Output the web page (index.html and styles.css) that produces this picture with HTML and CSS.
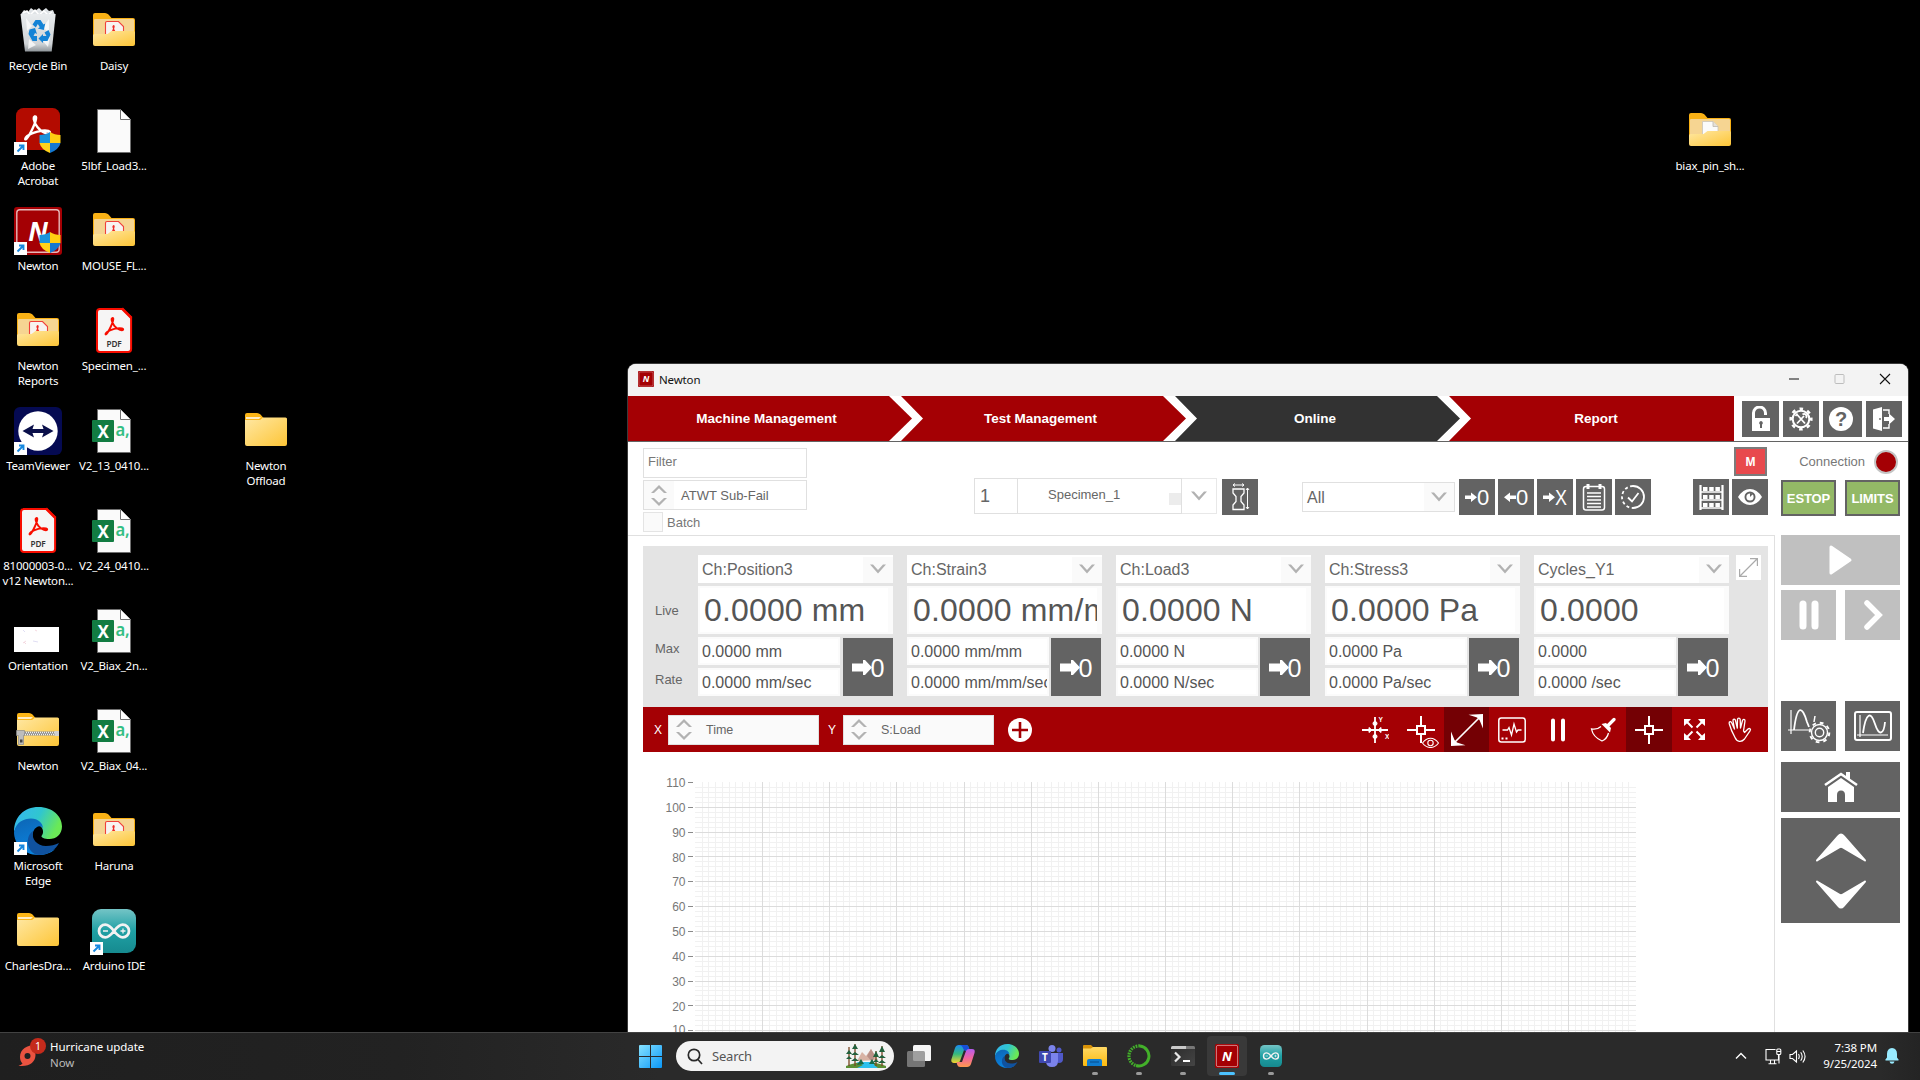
FILE: index.html
```html
<!DOCTYPE html>
<html lang="en">
<head>
<meta charset="utf-8">
<title>Desktop</title>
<link rel="stylesheet" href="styles.css">
</head>
<body>
<svg class="defs" width="0" height="0" aria-hidden="true">
  <defs>
    <linearGradient id="gFolder" x1="0" y1="0" x2="1" y2="1"><stop offset="0" stop-color="#ffe8a4"/><stop offset="1" stop-color="#fdc536"/></linearGradient>
    <linearGradient id="gTeal" x1="0" y1="0" x2="0" y2="1"><stop offset="0" stop-color="#74c4c6"/><stop offset=".5" stop-color="#1fa0a4"/><stop offset="1" stop-color="#168a8f"/></linearGradient>
    <linearGradient id="gBin" x1="0" y1="0" x2="0" y2="1"><stop offset="0" stop-color="#e9ecee"/><stop offset=".8" stop-color="#cfd3d6"/><stop offset="1" stop-color="#8f959a"/></linearGradient>
    <linearGradient id="gEdgeTop" x1="0" y1="0" x2="1" y2=".35"><stop offset="0" stop-color="#35b5f3"/><stop offset=".55" stop-color="#30c6cf"/><stop offset="1" stop-color="#6ae956"/></linearGradient>
    <linearGradient id="gEdgeMid" x1="0" y1="0" x2=".4" y2="1"><stop offset="0" stop-color="#0d65b4"/><stop offset="1" stop-color="#0a84e0"/></linearGradient>
    <linearGradient id="gWin" x1="0" y1="0" x2="1" y2="1"><stop offset="0" stop-color="#86e2ff"/><stop offset="1" stop-color="#0a97f7"/></linearGradient>
    <linearGradient id="gCopA" x1="0" y1="0" x2="0" y2="1"><stop offset="0" stop-color="#1a8cf2"/><stop offset=".5" stop-color="#35b97c"/><stop offset="1" stop-color="#f5d52c"/></linearGradient>
    <linearGradient id="gCopB" x1="0" y1="0" x2="0" y2="1"><stop offset="0" stop-color="#b45cf0"/><stop offset=".5" stop-color="#f2649e"/><stop offset="1" stop-color="#ff9a4c"/></linearGradient>
    <linearGradient id="gExp" x1="0" y1="0" x2="0" y2="1"><stop offset="0" stop-color="#ffd965"/><stop offset="1" stop-color="#fbb90e"/></linearGradient>
    <linearGradient id="gTerm" x1="0" y1="0" x2="1" y2="1"><stop offset="0" stop-color="#2b2b2b"/><stop offset="1" stop-color="#454545"/></linearGradient>

    <path id="acro" d="M1.2 17.2C4 14.500 8.500 4.500 8.300 1.900 8.100.4 6.300.8 6.600 2.900 7.200 6.600 10.500 11.600 15 12.900 18.200 13.800 19.200 12.200 17 11.400 13.500 10.300 5 12.500 1.800 15.200.2 16.600.2 18 1.200 17.200Z"/>

    <symbol id="i-folder" viewBox="0 0 48 48">
      <path d="M3 8q0-2 2-2h10q2 0 3.500 1.500L21.500 11H43q2 0 2 2v8H3z" fill="#fbb517"/>
      <path d="M4 12h13l2-2h-15z" fill="#fff" opacity=".75"/>
      <path d="M3 13h15l3-2.500h22.500q1.500 0 1.500 1.500v25q0 2-2 2H5q-2 0-2-2z" fill="url(#gFolder)"/>
    </symbol>
    <symbol id="i-open" viewBox="0 0 48 48">
      <path d="M3 8q0-2 2-2h10q2 0 3.500 1.500L21.500 11H43q2 0 2 2v24H3z" fill="#f9b115"/>
      <rect x="4" y="12" width="40" height="18" rx="1" fill="#f6d592"/>
    </symbol>
    <symbol id="i-openfront" viewBox="0 0 48 48">
      <path d="M3 28.500q0-1.500 1.500-1.500h13l4-3h22q1.500 0 1.500 1.500v11.500q0 2-2 2H5q-2 0-2-2z" fill="url(#gFolder)"/>
    </symbol>
    <symbol id="i-folderpdf" viewBox="0 0 48 48">
      <use href="#i-open"/>
      <path d="M15.500 31V16q0-1.500 1.500-1.500h11.500l5 5V31z" fill="#f7f3f0" stroke="#f0413a" stroke-width="1.100"/>
      <use href="#acro" transform="translate(18.500 18) scale(.68)" fill="none" stroke="#ee2a24" stroke-width="1.700"/>
      <use href="#i-openfront"/>
    </symbol>
    <symbol id="i-folderdoc" viewBox="0 0 48 48">
      <use href="#i-open"/>
      <path d="M16.500 31V14.500h10.500l5 5V31z" fill="#fbfbfb" stroke="#c9c4ba" stroke-width=".8"/>
      <path d="M27 14.500v5h5" fill="#e4e0d8" stroke="#bdb8ae" stroke-width=".8"/>
      <use href="#i-openfront"/>
    </symbol>
    <symbol id="i-zip" viewBox="0 0 48 48">
      <use href="#i-folder"/>
      <path d="M5 26.500h38" stroke="#8b8b8b" stroke-width="4"/>
      <path d="M6 25.500h37M7 27.500h36" stroke="#efefef" stroke-width="1.300" stroke-dasharray="1 1"/>
      <path d="M2.500 23.500h8v5H9.500v9h-5v-9h-2z" fill="#bdbdbd" stroke="#8a8a8a" stroke-width=".7"/>
      <rect x="6" y="32.500" width="2.500" height="3" fill="#444"/>
      <rect x="40.500" y="24" width="4.500" height="5" fill="#d0d0d0"/>
    </symbol>
    <symbol id="i-file" viewBox="0 0 48 48">
      <path d="M7.500 2.500h23l10 10v33h-33z" fill="#fafafa" stroke="#6f6f6f"/>
      <path d="M30.500 2.500v10h10" fill="#fff" stroke="#6f6f6f"/>
    </symbol>
    <symbol id="i-csv" viewBox="0 0 48 48">
      <use href="#i-file"/>
      <rect x="2" y="13" width="22" height="22" rx="1" fill="#127c42"/>
      <text x="13" y="30.500" text-anchor="middle" font-size="17" font-weight="bold" fill="#fff">X</text>
      <text x="25.500" y="29" font-size="18" font-weight="600" fill="#34bf84" textLength="14" lengthAdjust="spacingAndGlyphs">a,</text>
    </symbol>
    <symbol id="i-pdf" viewBox="0 0 48 48">
      <path d="M9 1.900h23.500l8.600 8.600V42q0 3-3 3H10q-3 0-3-3V5q0-3 3-3z" fill="#f6f5f5" stroke="#f80d00" stroke-width="2"/>
      <path d="M32 1.500l9.500 9.500" stroke="#f80d00" stroke-width="2.500"/>
      <use href="#acro" transform="translate(15 10)" fill="none" stroke="#f80d00" stroke-width="1.900"/>
      <text x="24" y="39.500" text-anchor="middle" font-size="9.500" font-weight="600" fill="#333" textLength="15" lengthAdjust="spacingAndGlyphs">PDF</text>
    </symbol>
    <symbol id="i-cut" viewBox="0 0 48 48">
      <rect x="0" y="35" width="13" height="13" fill="#fff"/>
      <path d="M3.500 44.500L9 39M5 38.500h4.500V43" fill="none" stroke="#1788e0" stroke-width="1.900"/>
    </symbol>
    <symbol id="i-shield" viewBox="0 0 48 48">
      <path d="M36 25v11H25.500V28q6 0 10.500-3z" fill="#1b93dc"/>
      <path d="M36 25v11h10.500V28q-6 0-10.500-3z" fill="#ffce12"/>
      <path d="M36 46V36H25.500q1.500 6.500 10.500 10z" fill="#ffd21a"/>
      <path d="M36 46V36h10.500q-1.500 6.500-10.500 10z" fill="#1478d0"/>
    </symbol>
    <symbol id="i-acrobat" viewBox="0 0 48 48">
      <rect x="2" y="1" width="44" height="42" rx="7.500" fill="#b30b00"/>
      <use href="#acro" transform="translate(10.500 8) scale(1.400)" fill="none" stroke="#fff" stroke-width="1.700"/>
      <use href="#i-shield"/><use href="#i-cut"/>
    </symbol>
    <symbol id="i-n" viewBox="0 0 48 48">
      <rect width="48" height="48" rx="3" fill="#a40004"/>
      <rect x="2.800" y="2.800" width="42.400" height="42.400" rx="3" fill="none" stroke="#e6b9ba" stroke-width="1.400"/>
      <text x="24" y="34" text-anchor="middle" font-size="26" font-weight="bold" font-style="italic" fill="#fff">N</text>
    </symbol>
    <symbol id="i-newton" viewBox="0 0 48 48"><use href="#i-n"/><use href="#i-shield"/><use href="#i-cut"/></symbol>
    <symbol id="i-tv" viewBox="0 0 48 48">
      <rect width="48" height="48" rx="6" fill="#050a52"/>
      <circle cx="24" cy="24" r="19.700" fill="#fff"/>
      <path d="M8.500 24l11.500-6.500-1.500 4.500h11L28 17.500 39.500 24 28 30.500l1.500-4.500h-11l1.500 4.500z" fill="#0a0f4a"/>
      <use href="#i-cut"/>
    </symbol>
    <symbol id="i-thumb" viewBox="0 0 48 48">
      <rect y="20" width="45" height="25" fill="#fff"/>
      <path d="M21 23l2 1M9 36l3-2M10 35l2 2" stroke="#f3d5dc" stroke-width=".9"/>
      <path d="M19 34l5 1M9 23l2 2" stroke="#dcdaf2" stroke-width=".9"/>
    </symbol>
    <symbol id="i-bin" viewBox="0 0 48 48">
      <path d="M7 7l3-4 4 2 3-4 4 3 4-3 3 3 4-3 3 3 4-1 2 5-2 6H9z" fill="#dfe3e6"/>
      <path d="M9 6l4-2 3 4 5-5 4 5 5-4 4 4 4-3" stroke="#fff" stroke-width="1.500" fill="none"/>
      <path d="M6.500 7h35.200l-4 37.500H11z" fill="url(#gBin)"/>
      <path d="M12 11l6 8-5 5zM35 12l-6 8 6 6zM15 32l7 6-8 4zM28 33l8-3-2 10z" fill="#fff" opacity=".75"/>
      <path d="M18.500 17.500l3-4.500h5l3 4.500 1.800-1-1.500 6.500-6-1.500 2-1.300-2-3.200-2 3.500z" fill="#1483d6"/>
      <path d="M15.500 22.500l5.500-1.500 2 6-2-1-1.500 3h3.500v5h-4.500l-4-7z" fill="#1483d6"/>
      <path d="M24.500 31.500l4.500-4.500v2h3.500l-2-3.500 4-2.500 2 4.500-3 6.500H29v2z" fill="#1483d6"/>
    </symbol>
    <symbol id="i-edge" viewBox="0 0 48 48">
      <path d="M0 25C0 10 10 0 24.500 0 39 0 48 9.500 48 19.500 48 27.500 42 32 35.500 32 30 32 27 30.500 27.500 29 30 26 30 21 24 17 16 11 4 15 0 25z" fill="url(#gEdgeTop)"/>
      <path d="M0 25C2 15 10 11.500 17 11.500c7 0 12 4.500 12 10-1-2-4-3-6-1.500-7 4-5 16 2 21 6 4 12 3.500 16 1C37 46 31 48 24 48 10 48 0 37 0 25z" fill="url(#gEdgeMid)"/>
      <path d="M19 24c-2 8 4 15 13 15 5 0 9-1 13-3-3 6-10 12-20 12C13 47 10 30 19 24z" fill="#10529f"/>
    </symbol>
    <symbol id="i-edgecut" viewBox="0 0 48 48"><use href="#i-edge"/><use href="#i-cut"/></symbol>
    <symbol id="i-ard" viewBox="0 0 48 48">
      <rect x="2" y="2" width="44" height="44" rx="9" fill="url(#gTeal)"/>
      <path d="M24 24c-3.500-4.500-5.500-6.300-8.700-6.300a6.300 6.300 0 0 0 0 12.600c3.200 0 5.200-1.800 8.700-6.300 3.500-4.500 5.500-6.300 8.700-6.300a6.300 6.300 0 0 1 0 12.600c-3.200 0-5.200-1.800-8.700-6.300z" fill="none" stroke="#f2f2f2" stroke-width="2.800"/>
      <path d="M13 24h5M30.500 24h5M33 21.500v5" stroke="#f2f2f2" stroke-width="1.300"/>
    </symbol>
    <symbol id="i-ardcut" viewBox="0 0 48 48"><use href="#i-ard"/><use href="#i-cut"/></symbol>

    <symbol id="c-down" viewBox="0 0 16 10"><path d="M0 .5h3L8 6l5-5.500h3L8 9.500z" fill="#b2b2b2"/></symbol>
    <symbol id="c-spin" viewBox="0 0 16 21"><path d="M0 8L8 0l8 8h-3L8 3.200 3 8zM0 13l8 8 8-8h-3l-5 4.800L3 13z" fill="#b2b2b2"/></symbol>
    <symbol id="c-zero" viewBox="0 0 50 58"><path d="M9 25.500h11V22h2l7 7.500-7 7.500h-2v-3.500H9z" fill="#fff"/><text x="27.500" y="38.500" font-size="26.500" fill="#fff" textLength="14" lengthAdjust="spacingAndGlyphs">0</text></symbol>
  </defs>
</svg>

<main class="desktop">
  <div class="shortcut c1 r1"><svg><use href="#i-bin"/></svg><span>Recycle Bin</span></div>
  <div class="shortcut c1 r2"><svg><use href="#i-acrobat"/></svg><span>Adobe<br>Acrobat</span></div>
  <div class="shortcut c1 r3"><svg><use href="#i-newton"/></svg><span>Newton</span></div>
  <div class="shortcut c1 r4"><svg><use href="#i-folderpdf"/></svg><span>Newton<br>Reports</span></div>
  <div class="shortcut c1 r5"><svg><use href="#i-tv"/></svg><span>TeamViewer</span></div>
  <div class="shortcut c1 r6"><svg><use href="#i-pdf"/></svg><span>81000003-0...<br>v12 Newton...</span></div>
  <div class="shortcut c1 r7"><svg><use href="#i-thumb"/></svg><span>Orientation</span></div>
  <div class="shortcut c1 r8"><svg><use href="#i-zip"/></svg><span>Newton</span></div>
  <div class="shortcut c1 r9"><svg><use href="#i-edgecut"/></svg><span>Microsoft<br>Edge</span></div>
  <div class="shortcut c1 r10"><svg><use href="#i-folder"/></svg><span>CharlesDra...</span></div>
  <div class="shortcut c2 r1"><svg><use href="#i-folderpdf"/></svg><span>Daisy</span></div>
  <div class="shortcut c2 r2"><svg><use href="#i-file"/></svg><span>5lbf_Load3...</span></div>
  <div class="shortcut c2 r3"><svg><use href="#i-folderpdf"/></svg><span>MOUSE_FL...</span></div>
  <div class="shortcut c2 r4"><svg><use href="#i-pdf"/></svg><span>Specimen_...</span></div>
  <div class="shortcut c2 r5"><svg><use href="#i-csv"/></svg><span>V2_13_0410...</span></div>
  <div class="shortcut c2 r6"><svg><use href="#i-csv"/></svg><span>V2_24_0410...</span></div>
  <div class="shortcut c2 r7"><svg><use href="#i-csv"/></svg><span>V2_Biax_2n...</span></div>
  <div class="shortcut c2 r8"><svg><use href="#i-csv"/></svg><span>V2_Biax_04...</span></div>
  <div class="shortcut c2 r9"><svg><use href="#i-folderpdf"/></svg><span>Haruna</span></div>
  <div class="shortcut c2 r10"><svg><use href="#i-ardcut"/></svg><span>Arduino IDE</span></div>
  <div class="shortcut c4 r5"><svg><use href="#i-folder"/></svg><span>Newton<br>Offload</span></div>
  <div class="shortcut c23 r2"><svg><use href="#i-folderdoc"/></svg><span>biax_pin_sh...</span></div>
</main>

<section class="window">
  <header class="titlebar">
    <svg class="appicon" viewBox="0 0 48 48"><use href="#i-n"/></svg>
    <span class="title">Newton</span>
    <svg class="winctl" viewBox="0 0 102 12" fill="none">
      <path d="M0 6h10" stroke="#111" stroke-width="1.200"/>
      <rect x="46" y="1.500" width="9" height="9" rx="1" stroke="#bdbdbd"/>
      <path d="M91 1l10 10M101 1L91 11" stroke="#111" stroke-width="1.100"/>
    </svg>
  </header>

  <nav class="steps">
    <div class="step first">Machine Management</div>
    <div class="step">Test Management</div>
    <div class="step active">Online</div>
    <div class="step last">Report</div>
    <div class="navbtns">
      <button class="btn w37"><svg width="22" height="26" viewBox="0 0 22 26"><path d="M3.500 12V7a6 6 0 0 1 12 0v2" fill="none" stroke="#fff" stroke-width="3"/><rect x="2" y="12" width="18" height="13" fill="#fff"/><path d="M11 15a2 2 0 0 1 1 3.600V22h-2v-3.400A2 2 0 0 1 11 15z" fill="#636363"/></svg></button>
      <button class="btn"><svg width="26" height="26" viewBox="-13 -13 26 26" fill="none" stroke="#fff"><circle r="8.300" stroke-width="2"/><circle r="10.300" stroke-width="2.600" stroke-dasharray="3.600 4.490" stroke-dashoffset="1.800"/><path d="M-4 4.500L3 -3M-4 -4.500L4 4.500" stroke-width="1.800"/><path d="M1.500 -4.500a2.500 2.500 0 0 1 3.500 3.500M-5.500 -3l2-2.500" stroke-width="1.800"/></svg></button>
      <button class="btn w39"><svg width="24" height="24" viewBox="0 0 24 24"><circle cx="12" cy="12" r="12" fill="#fff"/><text x="12" y="19" font-size="20" font-weight="bold" text-anchor="middle" fill="#636363">?</text></svg></button>
      <button class="btn"><svg width="24" height="24" viewBox="0 0 24 24"><path d="M1 2.500L10 0v24l-9-2.500z" fill="#fff"/><path d="M11 3h6v4M11 21h6v-4" fill="none" stroke="#fff" stroke-width="1.400"/><path d="M12 10h5V6.500l6 5.500-6 5.500V14h-5z" fill="#fff"/><circle cx="8" cy="12" r=".9" fill="#636363"/></svg></button>
    </div>
  </nav>

  <div class="options">
    <div class="filters">
      <div class="field">Filter</div>
      <div class="field spinner"><i><svg width="16" height="21"><use href="#c-spin"/></svg></i><span>ATWT Sub-Fail</span></div>
      <label class="check"><i></i>Batch</label>
    </div>
    <div class="specimen">
      <div class="snum">1</div>
      <div class="sname"><span>Specimen_1</span><i></i></div>
      <div class="sdrop"><svg width="16" height="10"><use href="#c-down"/></svg></div>
      <button class="btn"><svg width="20" height="28" viewBox="0 0 20 28" fill="none" stroke="#fff" stroke-width="1.300"><path d="M3 6h11v4l-3 3.500v5l3 3.500v4.500H3V22l3-3.500v-5L3 10z"/><path d="M3 2h11M5 .5L3 2l2 1.500M12 .5L14 2l-2 1.500M17.500 5v21M16 7l1.500-2L19 7M16 24l1.500 2 1.500-2" stroke-width="1"/></svg></button>
    </div>
    <div class="allselect"><span>All</span><i><svg width="16" height="10"><use href="#c-down"/></svg></i></div>
    <div class="tools">
      <button class="btn"><svg width="36" height="36"><path d="M6 16.500h6v-3l6 4.700-6 4.700v-3H6z" fill="#fff"/><text x="18" y="26" font-size="22" fill="#fff">0</text></svg></button>
      <button class="btn"><svg width="36" height="36"><path d="M18 16.500h-6v-3l-6 4.700 6 4.700v-3h6z" fill="#fff"/><text x="18" y="26" font-size="22" fill="#fff">0</text></svg></button>
      <button class="btn"><svg width="36" height="36"><path d="M6 16.500h6v-3l6 4.700-6 4.700v-3H6z" fill="#fff"/><text x="18" y="26" font-size="22" fill="#fff" textLength="12" lengthAdjust="spacingAndGlyphs">X</text></svg></button>
      <button class="btn"><svg width="24" height="28" viewBox="0 0 24 28" fill="none" stroke="#fff"><rect x="1.500" y="3.500" width="21" height="23.500" rx="2.500" stroke-width="1.500"/><path d="M6 1v5M18 1v5" stroke-width="3"/><path d="M5 10h14M5 13.500h14M5 17h14M5 20.500h14M5 24h14" stroke-width="1.500"/></svg></button>
      <button class="btn"><svg width="26" height="26" viewBox="-13 -13 26 26" fill="none" stroke="#fff" stroke-width="1.800"><path d="M0 -11a11 11 0 0 1 0 22"/><path d="M0 -11a11 11 0 0 0 0 22" stroke-dasharray="3 2.500"/><path d="M-5 .5l4 4 6.500-8.500"/></svg></button>
    </div>
    <div class="viewtools">
      <button class="mbtn">M</button>
      <button class="btn"><svg width="25" height="25" viewBox="0 0 25 25"><path d="M1.500 0v25M23.500 0v25" stroke="#fff" stroke-width="2.200"/><path d="M1 7h23M1 15h23M1 23h23" stroke="#fff" stroke-width="1.600"/><path d="M4 4h17M4 12h17M4 20h17" stroke="#fff" stroke-width="4" stroke-dasharray="4.500 1.700"/></svg></button>
      <button class="btn"><svg width="24" height="18" viewBox="0 0 24 18"><path d="M0 9Q5 1 12 1t12 8q-5 8-12 8T0 9z" fill="#fff"/><circle cx="12" cy="9" r="5.500" fill="#636363"/><circle cx="12" cy="9" r="3.600" fill="#fff"/><path d="M12 9l0-4 3 1z" fill="#636363"/></svg></button>
    </div>
    <div class="status">
      <div class="conn">Connection<i></i></div>
      <div class="limits"><button class="green">ESTOP</button><button class="green">LIMITS</button></div>
    </div>
  </div>

  <div class="body">
    <div class="content">
      <div class="live">
        <div class="rowlabels"><span>Live</span><span>Max</span><span>Rate</span></div>
        <div class="channel"><div class="sel">Ch:Position3<i><svg width="16" height="10"><use href="#c-down"/></svg></i></div><div class="val">0.0000 mm</div><div class="sub">0.0000 mm</div><div class="sub">0.0000 mm/sec</div><button class="zero"><svg width="50" height="58"><use href="#c-zero"/></svg></button></div>
        <div class="channel"><div class="sel">Ch:Strain3<i><svg width="16" height="10"><use href="#c-down"/></svg></i></div><div class="val">0.0000 mm/mm</div><div class="sub">0.0000 mm/mm</div><div class="sub">0.0000 mm/mm/sec</div><button class="zero"><svg width="50" height="58"><use href="#c-zero"/></svg></button></div>
        <div class="channel"><div class="sel">Ch:Load3<i><svg width="16" height="10"><use href="#c-down"/></svg></i></div><div class="val">0.0000 N</div><div class="sub">0.0000 N</div><div class="sub">0.0000 N/sec</div><button class="zero"><svg width="50" height="58"><use href="#c-zero"/></svg></button></div>
        <div class="channel"><div class="sel">Ch:Stress3<i><svg width="16" height="10"><use href="#c-down"/></svg></i></div><div class="val">0.0000 Pa</div><div class="sub">0.0000 Pa</div><div class="sub">0.0000 Pa/sec</div><button class="zero"><svg width="50" height="58"><use href="#c-zero"/></svg></button></div>
        <div class="channel"><div class="sel">Cycles_Y1<i><svg width="16" height="10"><use href="#c-down"/></svg></i></div><div class="val">0.0000</div><div class="sub">0.0000</div><div class="sub">0.0000 /sec</div><button class="zero"><svg width="50" height="58"><use href="#c-zero"/></svg></button></div>
        <div class="expand"><svg width="19" height="19" viewBox="0 0 19 19" fill="none" stroke="#aaa" stroke-width="1.200"><path d="M1 18L18 1M11 .6h7.400V8M.6 11v7.400H8"/></svg></div>
      </div>

      <div class="plotbar">
        <span class="axis">X</span>
        <div class="field spinner pick"><i><svg width="16" height="21"><use href="#c-spin"/></svg></i><span>Time</span></div>
        <span class="axis second">Y</span>
        <div class="field spinner pick"><i><svg width="16" height="21"><use href="#c-spin"/></svg></i><span>S:Load</span></div>
        <svg class="plus" width="24" height="24"><circle cx="12" cy="12" r="12" fill="#fff"/><path d="M12 4v16M4 12h16" stroke="#a40004" stroke-width="2.600"/></svg>
        <div class="plottools">
          <i><svg width="28" height="28" viewBox="0 0 28 28" fill="none" stroke="#fff"><path d="M14 1v26M1 14h26" stroke-width="1.800"/><path d="M14 5.500a2 2 0 0 1 0 4 2 2 0 0 1 0-4zM14 18.500a2 2 0 0 1 0 4 2 2 0 0 1 0-4zM11 14l-3-2.500v5zM17 14l3-2.500v5z" fill="#fff"/><text x="17.500" y="5.500" font-size="6.500" font-weight="bold" fill="#fff" stroke="none">Y</text><text x="24" y="22.500" font-size="6.500" font-weight="bold" fill="#fff" stroke="none">X</text></svg></i>
          <i><svg width="36" height="36" viewBox="0 0 36 36" fill="none" stroke="#fff"><path d="M18 4v9M18 22v9M4 18h9M23 18h9" stroke-width="2"/><rect x="14" y="14" width="8" height="8" stroke-width="2"/><path d="M19.500 31q3.500-4.800 8-4.800t8 4.800q-3.500 4.500-8 4.500t-8-4.500z" fill="#a40004" stroke-width="1.100"/><circle cx="27.500" cy="31" r="2.700" stroke-width="1.100"/></svg></i>
          <i class="on"><svg width="34" height="34" viewBox="0 0 34 34" fill="#fff"><path d="M4 30L30 4" stroke="#fff" stroke-width="1.700"/><path d="M18.500 1.800L33 1v14.500L29.500 7l-2.500-2.500zM1 33V18.500L4.500 27 7 29.500l8.500 2.700z"/></svg></i>
          <i><svg width="28" height="26" viewBox="0 0 28 26" fill="none" stroke="#fff"><rect x=".8" y="1" width="26.400" height="24" rx="2.500" stroke-width="1.500"/><path d="M4.500 13h5l1.500-2.500L13.500 18 16 7l2.500 8 1.500-2h3.500" stroke-width="1.300"/><path d="M3.500 21.500h2M7.500 21.500h2" stroke-width="2"/></svg></i>
          <i><svg width="16" height="24" viewBox="0 0 16 24"><path d="M3 2.500v19M13 2.500v19" stroke="#fff" stroke-width="4" stroke-linecap="round"/></svg></i>
          <i><svg width="26" height="26" viewBox="0 0 26 26"><path d="M24 2.500l-6 6" stroke="#fff" stroke-width="3.200" stroke-linecap="round"/><path d="M11.500 7l4.500-1 5 5-1 4.500z" fill="#fff"/><path d="M11 9.500q-4 3.500-9.500 2.500Q3 20 12 24q5-2 6.500-8" fill="none" stroke="#fff" stroke-width="1.300"/></svg></i>
          <i class="on"><svg width="28" height="28" viewBox="0 0 28 28" fill="none" stroke="#fff" stroke-width="2"><path d="M14 0v9M14 19v9M0 14h9M19 14h9"/><rect x="10" y="10" width="8" height="8"/></svg></i>
          <i><svg width="21" height="21" viewBox="0 0 21 21"><path d="M2 2l6.500 6.500M19 2l-6.500 6.500M2 19l6.500-6.500M19 19l-6.500-6.500" stroke="#fff" stroke-width="2"/><path d="M0 0h7L5 2.300 2.300 5 0 7zM21 0v7l-2.300-2L16 2.300 14 0zM0 21v-7l2.300 2L5 18.700 7 21zM21 21h-7l2-2.300 2.700-2.700 2.300-2z" fill="#fff"/></svg></i>
          <i><svg width="24" height="26" viewBox="0 0 24 26" fill="none" stroke="#fff" stroke-width="1.300" stroke-linejoin="round"><path d="M7 20.500C5 17 2 9.500 1.200 6.500.8 4.500 3 4 3.800 6L6.500 12 5 4C4.700 2 7 1.500 7.500 3.500L9.300 11 9.500 2.500C9.600.6 12 .6 12.200 2.500L12.500 11 14.500 3.500C15 1.700 17.200 2.200 17 4L15.500 14 16.500 15.500 20 12C21.500 10.800 23.300 12 22 13.800L16.500 22C13.500 25.500 9 25.200 7 20.500z"/></svg></i>
        </div>
      </div>

      <svg class="chart" width="1131" height="280" viewBox="643 752 1131 280" shape-rendering="crispEdges">
        <path id="minor" stroke="#f1f1f1" fill="none"/>
        <path id="major" stroke="#dcdcdc" fill="none"/>
        <path id="ticks" stroke="#8a8a8a" fill="none"/>
        <g class="ylabels">
          <text x="685.500" y="787">110</text><text x="685.500" y="812">100</text><text x="685.500" y="837">90</text><text x="685.500" y="862">80</text><text x="685.500" y="886">70</text><text x="685.500" y="911">60</text><text x="685.500" y="936">50</text><text x="685.500" y="961">40</text><text x="685.500" y="986">30</text><text x="685.500" y="1011">20</text><text x="685.500" y="1034">10</text>
        </g>
      </svg>
    </div>

    <aside class="controls">
      <button class="big off wide"><svg width="26" height="32" viewBox="0 0 26 32"><path d="M3 3v26L22 16z" fill="#fff" stroke="#fff" stroke-width="3" stroke-linejoin="round"/></svg></button>
      <button class="big off mid"><svg width="20" height="30" viewBox="0 0 20 30"><path d="M4 4v22M16 4v22" stroke="#fff" stroke-width="7" stroke-linecap="round"/></svg></button>
      <button class="big off mid"><svg width="22" height="32" viewBox="0 0 22 32"><path d="M5 4l12 12L5 28" fill="none" stroke="#fff" stroke-width="5.500" stroke-linecap="round"/></svg></button>
      <button class="big lower"><svg width="44" height="36" viewBox="0 0 44 36" fill="none" stroke="#fff"><path d="M4 2v24M1 22h21" stroke-width="1.200"/><path d="M7 22C10 -3 15 -3 20 14L22 19" stroke-width="1.800"/><path d="M28 8l-1 6" stroke-width="1.500"/><circle cx="32.500" cy="24.500" r="8" stroke-width="1.400"/><circle cx="32.500" cy="24.500" r="9.800" stroke-width="2" stroke-dasharray="3.700 4"/><circle cx="32.500" cy="24.500" r="4.200" stroke-width="1.400"/></svg></button>
      <button class="big lower"><svg width="40" height="32" viewBox="0 0 40 32" fill="none" stroke="#fff"><rect x="2" y="2" width="36" height="28" rx="2" stroke-width="2"/><path d="M7 5v22M4 25h31" stroke-width="1.200"/><path d="M10 23C13 2 18 1 22 14c4 13 9 10 10-2" stroke-width="1.800"/></svg></button>
      <button class="big home"><svg width="34" height="30" viewBox="0 0 34 30"><path d="M1 13L17 2l16 11" fill="none" stroke="#fff" stroke-width="2.600"/><path d="M22 0h4v8l-4-3z" fill="#fff"/><path d="M4 15L17 6l13 9v15h-9v-7q0-4.500-4-4.500T13 23v7H4z" fill="#fff"/></svg></button>
      <button class="big jog"><svg width="52" height="76" viewBox="0 0 52 76" fill="#fff" stroke="#fff" stroke-width="2" stroke-linejoin="round"><path d="M2 27.500L23.500 3Q26 0 28.500 3L50 27.500 27 14q-1-.5-2 0zM2 48.500L23.500 73Q26 76 28.500 73L50 48.500 27 62q-1 .5-2 0z"/></svg></button>
    </aside>
  </div>
</section>

<footer class="taskbar">
  <div class="widget">
    <div class="storm">
      <svg width="20" height="24" viewBox="0 0 20 24"><path d="M17.500 1C9 1 2 5 2 13c0 3 1 5 2.500 6.500-1 1.200-2.500 1.800-4 2.200C11 23 17.500 18.500 17.500 11c0-2.500-1-4.500-2.500-6z" fill="#ea5340"/><circle cx="9.500" cy="12" r="3" fill="#202020"/></svg>
      <b>1</b>
    </div>
    <div><p>Hurricane update</p><p class="dim">Now</p></div>
  </div>
  <div class="cell"><svg width="23" height="23" viewBox="0 0 23 23" fill="url(#gWin)"><path d="M1 0h10v11H0V1q0-1 1-1zM12 0h10q1 0 1 1v10H12zM0 12h11v11H1q-1 0-1-1zM12 12h11v10q0 1-1 1H12z"/></svg></div>
  <div class="search">
    <svg width="16" height="17" viewBox="0 0 16 17" fill="none" stroke="#2a2a2a" stroke-width="1.700"><circle cx="7" cy="7" r="5.700"/><path d="M11 11.500l4 4.500"/></svg>
    <span>Search</span>
    <svg width="42" height="26" viewBox="0 0 42 26">
      <path d="M12 18l5-9 4 4 5-7 7 11z" fill="#d8b3a5"/><path d="M22 13l4-7 4 7-3 6z" fill="#b98f86"/>
      <path d="M1 23q20-8 40 0v2H1z" fill="#5b8f35"/><path d="M11 19h18v3l4 3H12l6-3z" fill="#2cc0ee"/>
      <path d="M4 4v19M10 1v22M31 8v15M37 3v20" stroke="#7a4724" stroke-width="1.300"/>
      <path d="M1 11l3-4 3 4zM1 16l3-3 3 3zM7 6l3-5 3 5zM6 12l4-3 4 3zM6 18l4-3 4 3zM28 14l3-6 3 6zM28 19l3-3 3 3zM34 9l3-6 3 6zM33 15l4-3 4 3zM33 20l4-3 4 3z" fill="#22603c"/>
      <path d="M12 22l4-6 3 5zM24 21l3-5 3 5z" fill="#186a4a"/>
    </svg>
  </div>
  <div class="apps">
    <div class="cell"><svg width="24" height="24" viewBox="0 0 24 24"><rect x="6" y="1" width="18" height="16" rx="1.500" fill="#f5f5f5"/><rect x="0" y="7" width="18" height="16" rx="1.500" fill="#8a8a8a" opacity=".8"/></svg></div>
    <div class="cell"><svg width="24" height="24" viewBox="0 0 24 24"><path d="M8 1h7q2 0 2.700 2L18.500 6H13l-4 11q-.700 2-3 2H3q-3.500 0-2.500-4L4 4q1-3 4-3z" fill="url(#gCopA)"/><path d="M8 1h7q2 0 2.700 2L19 7h-4q-2 0-2.600-2L11.500 3Q10.500 1 8 1z" fill="#174fd8"/><path d="M16 23H9q-2 0-2.700-2L5.500 18H11l4-11q.700-2 3-2h3q3.500 0 2.500 4L20 20q-1 3-4 3z" fill="url(#gCopB)"/></svg></div>
    <div class="cell"><svg width="24" height="24" viewBox="0 0 48 48"><use href="#i-edge"/></svg></div>
    <div class="cell"><svg width="24" height="24" viewBox="0 0 24 24"><circle cx="20" cy="6" r="2.500" fill="#5059c9"/><circle cx="13" cy="4.500" r="3.500" fill="#7b83eb"/><path d="M16 9h8v6q0 4-4 4-3 0-4-3z" fill="#5059c9"/><path d="M7 9h12v8q0 6-6 6t-6-6z" fill="#7b83eb"/><rect x="0" y="7" width="12" height="12" rx="1" fill="#4048b0"/><text x="6" y="16.500" font-size="10" font-weight="bold" text-anchor="middle" fill="#fff">T</text></svg></div>
    <div class="cell run"><svg width="24" height="24" viewBox="0 0 24 24"><path d="M0 2q0-1 1-1h7l2 2v4H0z" fill="#d99207"/><path d="M0 4.500h8L10 3h13q1 0 1 1v18H1q-1 0-1-1z" fill="url(#gExp)"/><path d="M4 22v-5q0-2 2-2h11q2 0 2 2v5z" fill="#0f7cd0"/><path d="M7 18h9" stroke="#0a5ca5" stroke-width="1.500"/></svg></div>
    <div class="cell run"><svg width="24" height="24" viewBox="0 0 24 24" fill="none"><path d="M13 2a10 10 0 1 1-4 19.500" stroke="#43b02a" stroke-width="3"/><path d="M13 2A10 10 0 0 0 9 21.500" stroke="#43b02a" stroke-width="3.200" stroke-dasharray="1.700 1"/></svg></div>
    <div class="cell run"><svg width="24" height="24" viewBox="0 0 24 24"><rect y="2" width="24" height="20" rx="1.500" fill="url(#gTerm)"/><path d="M1.500 2h14v3H0V3.500Q0 2 1.500 2z" fill="#c9c9c9"/><path d="M15.500 2h7Q24 2 24 3.500V5h-8.500z" fill="#777"/><path d="M4 8.500l4.500 4.500L4 17.500" fill="none" stroke="#e8e8e8" stroke-width="2.200"/><path d="M12 17h7" stroke="#fff" stroke-width="2"/></svg></div>
    <div class="cell run active"><svg width="24" height="24" viewBox="0 0 48 48"><use href="#i-n"/></svg></div>
    <div class="cell run"><svg width="24" height="24" viewBox="0 0 48 48"><use href="#i-ard"/></svg></div>
  </div>
  <div class="tray">
    <svg width="12" height="8" viewBox="0 0 12 8" fill="none" stroke="#fff" stroke-width="1.400"><path d="M1 6.500l5-5 5 5"/></svg>
    <svg class="net" width="17" height="17" viewBox="0 0 17 17" fill="none" stroke="#fff" stroke-width="1.100"><path d="M10.500 1.500H1v10.500h12.500V7M3.500 15.800h8M5.500 12v3.500M9.500 12v3.500"/><rect x="11.800" y="1" width="4" height="5.500" rx="1"/><path d="M12 3.500h4M14 6.500v9"/></svg>
    <svg class="vol" width="17" height="15" viewBox="0 0 17 15" fill="none" stroke="#fff" stroke-width="1.100"><path d="M1 5.500h2.500L7.500 2v11l-4-3.500H1z"/><path d="M9.500 5q1.500 2.500 0 5M11.700 3.300q3 4.200 0 8.400M13.800 1.500q4.500 6 0 12"/></svg>
    <div class="clock"><p>7:38 PM</p><p>9/25/2024</p></div>
    <svg width="14" height="16" viewBox="0 0 14 16" fill="#99ebff"><path d="M7 0q5 .5 5 6v3.500l1.700 2.300q.3.700-.700.700H1q-1 0-.700-.700L2 9.500V6Q2 .5 7 0zM4.500 13.500h5Q9 15.800 7 15.800T4.500 13.500z"/></svg>
  </div>
</footer>
<script src="chart.js"></script>
</body>
</html>
```
FILE: styles.css
```css
* { box-sizing: border-box; }
body { margin: 0; width: 1920px; height: 1080px; overflow: hidden; background: #000; font-family: "Noto Sans", "Open Sans", sans-serif; font-size: 11.5px; position: relative; }
p { margin: 0; }
i { font-style: normal; }
button { border: 0; padding: 0; margin: 0; font: inherit; display: flex; align-items: center; justify-content: center; }
svg { display: block; flex: none; }
.defs { position: absolute; }

.desktop { display: grid; grid-template-columns: repeat(25, 76px); grid-template-rows: repeat(10, 100px); height: 1032px; }
.shortcut { display: flex; flex-direction: column; align-items: center; padding-top: 7px; gap: 3px; color: #fff; line-height: 15px; letter-spacing: -.2px; text-align: center; white-space: nowrap; }
.shortcut svg { width: 48px; height: 48px; }
.c1 { grid-column: 1; } .c2 { grid-column: 2; } .c4 { grid-column: 4; } .c23 { grid-column: 23; }
.r1 { grid-row: 1; } .r2 { grid-row: 2; } .r3 { grid-row: 3; } .r4 { grid-row: 4; } .r5 { grid-row: 5; }
.r6 { grid-row: 6; } .r7 { grid-row: 7; } .r8 { grid-row: 8; } .r9 { grid-row: 9; } .r10 { grid-row: 10; }

.window { position: absolute; left: 628px; top: 364px; width: 1280px; height: 668px; overflow: hidden; background: #fff; border-radius: 8px 8px 0 0; box-shadow: 0 0 0 1px #3a3a3a; font-family: "Liberation Sans", Arial, sans-serif; font-size: 13px; color: #666; }
.titlebar { height: 32px; background: #f3f3f3; display: flex; align-items: center; padding: 0 17px 2px 10px; font-family: "Noto Sans", sans-serif; font-size: 11.5px; color: #111; }
.appicon { width: 16px; height: 16px; }
.title { margin-left: 5px; letter-spacing: -.15px; }
.winctl { width: 102px; height: 12px; margin-left: auto; }

.steps { height: 46px; border-bottom: 1px solid #636363; display: flex; color: #fff; font-weight: bold; font-size: 13.5px; }
.step { width: 285px; margin-left: -11px; height: 45px; background: #a40004; display: flex; align-items: center; justify-content: center; clip-path: polygon(0 0, 262px 0, 285px 50%, 262px 100%, 0 100%, 22px 50%); }
.step.first { width: 284px; margin: 0; padding-right: 7px; clip-path: polygon(0 0, 261px 0, 284px 50%, 261px 100%, 0 100%); }
.step:nth-child(2) { padding-right: 6px; }
.step.active { background: #323232; padding-right: 5px; }
.step.last { width: 285px; padding-left: 9px; clip-path: polygon(0 0, 100% 0, 100% 100%, 0 100%, 22px 50%); }
.navbtns { display: flex; gap: 4px; padding: 5px 0 0 8px; }
.btn { width: 36px; height: 36px; background: #636363; }
.w37 { width: 37px; }
.w39 { width: 39px; padding-right: 3px; }

.options { height: 93px; display: flex; align-items: flex-start; padding: 6px 8px 0 15px; }
.filters { width: 164px; display: flex; flex-direction: column; gap: 2px; color: #777; }
.field { height: 30px; border: 1px solid #e0e0e0; display: flex; align-items: center; padding: 0 0 4px 4px; background: #fff; }
.field.spinner { padding: 0; color: #666; }
.spinner i { width: 30px; align-self: stretch; background: #fafafa; display: flex; align-items: center; justify-content: center; }
.spinner span { margin-left: 7px; }
.check { display: flex; align-items: center; gap: 4px; height: 20px; }
.check i { width: 20px; height: 20px; background: #fafafa; border: 1px solid #e4e4e4; }
.specimen { display: flex; margin: 30px 0 0 167px; height: 36px; }
.snum { width: 44px; border: 1px solid #e0e0e0; padding: 7px 0 0 5px; font-size: 18px; line-height: 20px; }
.sname { width: 164px; border: 1px solid #e0e0e0; border-left: 0; display: flex; align-items: flex-start; justify-content: space-between; padding: 8px 0 0 30px; line-height: 15px; }
.sname i { width: 12px; height: 12px; background: #ececec; margin-top: 6px; }
.sdrop { width: 35px; border: 1px solid #e8e8e8; border-left: 0; display: flex; align-items: center; justify-content: center; }
.specimen .btn { margin: 1px 0 0 5px; }
.allselect { margin: 34px 0 0 44px; width: 153px; height: 30px; border: 1px solid #e0e0e0; display: flex; align-items: center; justify-content: space-between; font-size: 16px; padding-left: 4px; }
.allselect span { padding-top: 1px; }
.allselect i { width: 30px; align-self: stretch; background: #fafafa; display: flex; align-items: center; justify-content: center; }
.tools { display: flex; gap: 3px; margin: 31px 0 0 4px; }
.viewtools { margin: -1px 0 0 42px; display: grid; grid-template-columns: 36px 36px; gap: 3px; }
.mbtn { grid-column: 2; margin-left: 2px; width: 33px; height: 29px; border: 2px solid #7b7b7b; background: #e8494d; color: #fff; font-weight: bold; font-size: 12px; }
.status { margin: -1px 0 0 13px; width: 119px; }
.conn { height: 29px; display: flex; align-items: center; justify-content: flex-end; gap: 9px; padding-right: 2px; color: #777; margin-bottom: 4px; }
.conn i { width: 24px; height: 24px; border-radius: 50%; background: #a40004; border: 2px solid #c4c4c4; }
.limits { display: flex; gap: 9px; }
.green { width: 55px; height: 36px; background: #93b966; border: 2px solid #636363; color: #fff; font-weight: bold; font-size: 13px; letter-spacing: -.1px; }

.body { display: flex; height: 497px; }
.content { width: 1146px; border-top: 1px solid #e0e0e0; padding: 10px 0 0 15px; }
.live { width: 1125px; height: 161px; background: #e4e4e4; display: flex; padding-top: 9px; align-items: flex-start; }
.rowlabels { width: 55px; padding: 31px 0 0 12px; display: grid; grid-template-rows: 49px 27px 35px; align-items: center; }
.channel { width: 195px; margin-right: 14px; display: grid; grid-template-columns: 142px 50px; grid-template-rows: 28px 48px 28px 28px; gap: 3px; white-space: nowrap; font-size: 16px; color: #555; }
.channel > div { background: #fff; overflow: hidden; border: 2px solid #fbfbfb; display: flex; align-items: center; }
.sel, .val { grid-column: 1 / 3; }
.channel .sel { justify-content: space-between; border-width: 2px 0 0; border-color: #fff; padding-left: 4px; color: #666; }
.sel i { width: 30px; align-self: stretch; background: #fafafa; display: flex; align-items: center; justify-content: center; padding-bottom: 2px; }
.channel .val { font-size: 32px; padding-left: 4px; border-right-width: 5px; letter-spacing: .15px; }
.channel .sub { grid-column: 1; padding: 2px 0 0 2px; }
.zero { grid-column: 2; grid-row: 3 / 5; background: #636363; margin-top: 1px; height: 58px; }
.channel:nth-child(n+3) .zero { margin-left: -1px; margin-right: 1px; }
.expand { width: 25px; height: 25px; background: #fff; margin-left: -7px; display: flex; align-items: center; justify-content: center; }

.plotbar { width: 1125px; height: 45px; background: #a40004; display: flex; align-items: center; padding-left: 11px; color: #fff; }
.axis { width: 14px; font-size: 12px; }
.axis.second { margin-left: 9px; width: 15px; }
.field.pick { width: 151px; background: #fafafa; font-size: 12.5px; }
.plus { margin-left: 14px; }
.plottools { margin-left: auto; padding-right: 5px; display: flex; height: 45px; }
.plottools i { width: 45.6px; display: flex; align-items: center; justify-content: center; }
.plottools .on { background: #740004; }
.ylabels text { font-size: 12px; fill: #777; text-anchor: end; }

.controls { width: 134px; border-left: 1px solid #e0e0e0; padding-left: 6px; display: grid; grid-template-columns: 55px 55px; grid-template-rows: 50px 50px 106px 56px 105px; gap: 5px 9px; align-content: start; align-items: end; }
.big { background: #636363; height: 50px; }
.big.off { background: #c0c0c0; }
.wide, .home, .jog { grid-column: 1 / 3; }
.jog { height: 105px; margin-top: 1px; margin-bottom: -1px; }

.taskbar { position: absolute; left: 0; top: 1032px; width: 1920px; height: 48px; border-top: 1px solid #424242; background: linear-gradient(90deg, #1f1f1f 0, #222 400px, #2a2a2a 660px, #2a2a2a 1880px, #242424 100%); display: flex; align-items: center; padding-bottom: 1px; color: #fff; }
.widget { width: 628px; display: flex; align-items: center; padding-left: 18px; gap: 12px; line-height: 16px; letter-spacing: -.05px; }
.widget p { position: relative; top: -1px; }
.dim { color: #bbb; }
.storm { position: relative; width: 20px; }
.storm b { position: absolute; left: 12px; top: -6px; width: 16px; height: 16px; border-radius: 50%; background: #c42b1c; font-size: 10.5px; line-height: 16px; text-align: center; font-weight: normal; }
.cell { width: 44px; height: 46px; display: flex; align-items: center; justify-content: center; position: relative; }
.search { width: 218px; height: 30px; margin: 0 3px 0 4px; border-radius: 15px; background: #f3f3f3; color: #555; display: flex; align-items: center; padding: 0 7px 0 11px; font-size: 13px; }
.search span { margin-left: 9px; margin-right: auto; letter-spacing: -.2px; padding-bottom: 1px; }
.apps { display: flex; }
.run::after { content: ""; position: absolute; left: 19px; bottom: 4px; width: 6px; height: 3px; border-radius: 2px; background: #9a9a9a; }
.active::before { content: ""; position: absolute; left: 2px; top: 3px; width: 40px; height: 40px; border-radius: 4px; background: #393939; }
.active svg { position: relative; }
.active::after { left: 14px; width: 16px; background: #4cc2ff; }
.tray { margin-left: auto; display: flex; align-items: center; padding-right: 21px; }
.net { margin-left: 18px; }
.vol { margin-left: 7px; }
.clock { width: 71px; text-align: right; margin-right: 8px; line-height: 16px; letter-spacing: -.1px; padding-bottom: 1px; }
```
FILE: chart.js
```js
// Builds the plot grid: ten minor divisions per major in x, five in y.
const left = 695, right = 1636, top0 = 782, bottom = 1032;
const stepX = 67.15, stepY = 24.82;
let minor = "", major = "", ticks = "";
for (let i = 1; i < 140; i++) {
  const x = Math.round(left + i * stepX / 10) + 0.5;
  const d = `M${x} ${top0}V${bottom}`;
  if (i % 10) minor += d; else major += d;
}
for (let i = 0; i <= 50; i++) {
  const y = Math.round(top0 + i * stepY / 5) + 0.5;
  const d = `M${left} ${y}H${right}`;
  if (i % 5) minor += d; else if (i) major += d;
  if (i % 5 === 0) ticks += `M688 ${y}H693`;
}
document.getElementById("minor").setAttribute("d", minor);
document.getElementById("major").setAttribute("d", major);
document.getElementById("ticks").setAttribute("d", ticks);
```
